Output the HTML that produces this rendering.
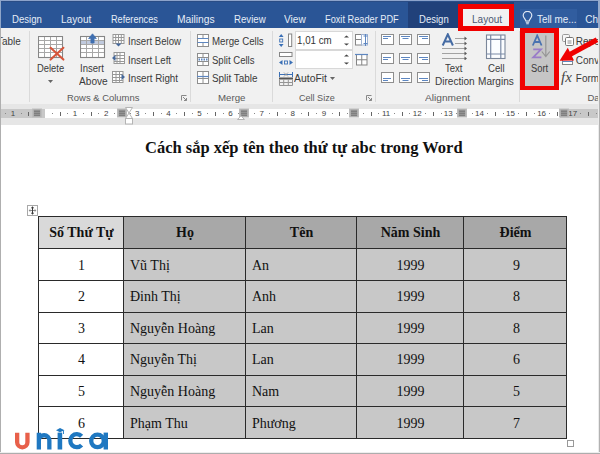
<!DOCTYPE html>
<html><head><meta charset="utf-8">
<style>
*{margin:0;padding:0;box-sizing:border-box}
html,body{width:600px;height:454px;overflow:hidden;background:#fff}
body{position:relative;font-family:"Liberation Sans",sans-serif}
.a{position:absolute;white-space:nowrap}
.sep{position:absolute;width:1px;background:#dadada;top:31px;height:71px}
.rn{position:absolute;top:108.5px;font-size:8px;line-height:10px;color:#444}
.tk{position:absolute;width:1px;height:4px;top:112px;background:#666}
.dt{position:absolute;width:1px;height:1px;top:113px;background:#888}
.cm{position:absolute;top:109px;width:9px;height:9px;background:#b5b5b5}
.tt{font-family:"Liberation Serif",serif;font-size:14px;line-height:16px;color:#111}
</style></head><body>
<!-- ===== tab bar ===== -->
<div class="a" style="left:0;top:0;width:600px;height:28px;background:#2a5596"></div>
<div class="a" style="left:408px;top:1px;width:106px;height:27px;background:#21417a"></div>
<div class="a" style="left:520px;top:9px;width:57px;height:19px;background:#315d9f"></div>
<div class="a" style="left:0;top:0;width:600px;height:1px;background:#8ca3cb"></div>
<div class="a" style="left:0;top:1px;width:600px;height:1px;background:#2a4d86"></div>
<!-- lightbulb -->
<svg class="a" style="left:522px;top:11px" width="11" height="14" viewBox="0 0 11 14"><path d="M3.8 10 C3.8 8 1.2 7 1.2 4.6 A4.3 4.3 0 0 1 9.8 4.6 C9.8 7 7.2 8 7.2 10 Z" fill="none" stroke="#dfe7f3" stroke-width="1.2"/><path d="M3.8 11.2h3.4M4.2 12.8h2.6" stroke="#dfe7f3" stroke-width="1.1"/></svg>

<!-- ===== ribbon ===== -->
<div class="a" style="left:0;top:28px;width:600px;height:76px;background:#f1f1f1"></div>
<!-- layout tab red box -->
<div class="a" style="left:458px;top:4px;width:56px;height:27px;background:#f1f1f1;border:5px solid #f00000"></div>
<div class="sep" style="left:29px"></div>
<div class="sep" style="left:190px"></div>
<div class="sep" style="left:272px"></div>
<div class="sep" style="left:375px"></div>
<div class="sep" style="left:519px"></div>

<!-- Delete icon -->
<svg class="a" style="left:38px;top:36px" width="27" height="26" viewBox="0 0 27 26">
<rect x="0.5" y="0.5" width="24" height="21" fill="#fff"/>
<path d="M0.5 4.5h24M0.5 8.5h24M0.5 12.5h24M0.5 16.5h24M6.5 0.5v21M12.5 0.5v21M18.5 0.5v21" stroke="#a8a8a8" stroke-width="1"/>
<rect x="0.5" y="0.5" width="24" height="21" fill="none" stroke="#868686" stroke-width="1.1"/>
<path d="M12.6 11.8 L25.4 23.6 M25.4 11.8 L12.6 23.6" stroke="#d6553a" stroke-width="2.1" stroke-linecap="round"/>
</svg>
<svg class="a" style="left:48px;top:80px" width="5" height="3"><path d="M0 0h5L2.5 3z" fill="#666"/></svg>

<!-- Insert Above icon -->
<svg class="a" style="left:80px;top:32px" width="26" height="27" viewBox="0 0 26 27">
<rect x="0.5" y="4.5" width="24" height="21" fill="#fff"/>
<rect x="0.5" y="8" width="24" height="4.5" fill="#c0cade"/>
<path d="M0.5 8.5h24M0.5 12.5h24M0.5 16.5h24M0.5 20.5h24M6.5 4.5v21M12.5 4.5v21M18.5 4.5v21" stroke="#a8a8a8" stroke-width="1"/>
<rect x="0.5" y="4.5" width="24" height="21" fill="none" stroke="#868686" stroke-width="1.1"/>
<path d="M12.5 1.8 L8.6 6.6 H10.9 V11 H14.1 V6.6 H16.4 Z" fill="#3f6fb0" stroke="#3f6fb0" stroke-width="0.7" stroke-linejoin="round"/>
</svg>

<!-- small insert icons -->
<svg class="a" style="left:112px;top:34px" width="13" height="13" viewBox="0 0 13 13"><rect x="1" y="0.5" width="11" height="9" fill="#fff"/><path d="M1 0.5h11M1 3.5h11M1 6.5h11M1 9.5h11M1 0v10M3.7 0v10M6.5 0v10M9.3 0v10M12 0v10" stroke="#989898" stroke-width="1"/><path d="M6.5 12.5 L3.5 9.5 H9.5 Z" fill="#44689c"/></svg>
<svg class="a" style="left:112px;top:52px" width="13" height="13" viewBox="0 0 13 13"><rect x="2" y="0.5" width="10.5" height="11" fill="#fff"/><path d="M2 0.5h10.5M2 3.5h10.5M2 6.5h10.5M2 9.5h10.5M2 11.5h10.5M2 0v12M5 0v12M8 0v12M12.5 0v12" stroke="#989898" stroke-width="1"/><path d="M0 6 L3.5 3 V9 Z" fill="#44689c"/></svg>
<svg class="a" style="left:112px;top:71px" width="13" height="13" viewBox="0 0 13 13"><rect x="0.5" y="0.5" width="10.5" height="11" fill="#fff"/><path d="M0.5 0.5h10.5M0.5 3.5h10.5M0.5 6.5h10.5M0.5 9.5h10.5M0.5 11.5h10.5M0.5 0v12M4 0v12M7.5 0v12M11 0v12" stroke="#989898" stroke-width="1"/><path d="M13 6 L9.5 3 V9 Z" fill="#44689c"/></svg>
<svg class="a" style="left:181px;top:95px" width="6" height="6"><path d="M0.5 5.5V0.5H5.5" stroke="#888" fill="none"/><path d="M2 2L5.5 5.5M3 5.5h2.5V3" stroke="#888" fill="none"/></svg>

<!-- Merge icons -->
<svg class="a" style="left:197px;top:34px" width="12" height="13" viewBox="0 0 12 13"><rect x="0.5" y="0.5" width="11" height="12" fill="#fff" stroke="#8e8e8e"/><path d="M6 0.5v4M6 8.5v4" stroke="#8e8e8e"/><path d="M0.5 4.5h11M0.5 8.5h11" stroke="#5d86c0" stroke-width="1.2"/></svg>
<svg class="a" style="left:197px;top:53px" width="12" height="13" viewBox="0 0 12 13"><rect x="0.5" y="0.5" width="11" height="12" fill="#fff" stroke="#8e8e8e"/><path d="M6 0.5v4M6 8.5v4" stroke="#8e8e8e"/><path d="M0.5 4.5h11M0.5 8.5h11" stroke="#8e8e8e" stroke-width="1"/><path d="M1.5 6.5h9" stroke="#5d86c0" stroke-width="2.2" stroke-dasharray="1.5 1"/></svg>
<svg class="a" style="left:197px;top:71px" width="12" height="13" viewBox="0 0 12 13"><rect x="0.5" y="0.5" width="11" height="12" fill="#fff" stroke="#8e8e8e"/><path d="M6 0.5v12" stroke="#8e8e8e"/><path d="M0 5.5h12" stroke="#5d86c0" stroke-width="1.2"/><path d="M0 7.5h12" stroke="#8e8e8e"/></svg>

<!-- Cell Size icons -->
<svg class="a" style="left:278px;top:33px" width="16" height="15" viewBox="0 0 16 15">
<path d="M3.2 1 L0.8 4 H5.6 Z M3.2 14 L0.8 11 H5.6 Z" fill="#3b70b6"/>
<rect x="1.7" y="6" width="3" height="3" fill="none" stroke="#3b70b6" stroke-width="0.9"/>
<rect x="10.5" y="1" width="3.2" height="12.5" fill="#fff" stroke="#858585"/>
</svg>
<div class="a" style="left:295px;top:31px;width:58px;height:19px;background:#fff;border:1px solid #d8d8d8"></div>
<svg class="a" style="left:344px;top:35px" width="5" height="11"><path d="M0 2.5L2.5 0.5L5 2.5ZM0 8.5L2.5 10.5L5 8.5Z" fill="#444"/></svg>
<svg class="a" style="left:278px;top:52px" width="16" height="14" viewBox="0 0 16 14">
<rect x="1.5" y="0.5" width="12.5" height="4" fill="#fff" stroke="#858585"/>
<path d="M1 10.5 L4.5 8 V13 Z M15 10.5 L11.5 8 V13 Z" fill="#3b70b6"/>
<rect x="6.5" y="9" width="3" height="3" fill="none" stroke="#3b70b6" stroke-width="0.9"/>
</svg>
<div class="a" style="left:295px;top:50px;width:58px;height:19px;background:#fff;border:1px solid #d8d8d8"></div>
<svg class="a" style="left:344px;top:54px" width="5" height="11"><path d="M0 2.5L2.5 0.5L5 2.5ZM0 8.5L2.5 10.5L5 8.5Z" fill="#444"/></svg>
<svg class="a" style="left:355px;top:34px" width="15" height="12" viewBox="0 0 15 12"><rect x="0.5" y="0.5" width="6" height="10.5" fill="#fff" stroke="#858585"/><path d="M0.5 5.5h6" stroke="#858585"/><rect x="6.5" y="0.5" width="6" height="10.5" fill="#fff" stroke="#9fb3d3"/><path d="M10.5 0v12M8.5 2h4M8.5 9.5h4" stroke="#5d86c0"/></svg>
<svg class="a" style="left:355px;top:53px" width="13" height="13" viewBox="0 0 13 13"><rect x="1.5" y="1.5" width="10.5" height="10.5" fill="#fff" stroke="#858585"/><path d="M6.75 1.5v10.5M1.5 6.75h10.5" stroke="#858585"/><path d="M0 1.5h13" stroke="#5d86c0" stroke-width="1.2"/></svg>
<svg class="a" style="left:279px;top:71px" width="14" height="15" viewBox="0 0 14 15">
<path d="M0.5 1v5M13.5 1v5M0.5 3.5h13" stroke="#3b70b6" stroke-width="1"/>
<path d="M5 1.5l4 4M9 1.5l-4 4" stroke="#959595" stroke-width="0.9"/>
<rect x="0" y="6.5" width="14" height="2" fill="#555"/>
<path d="M0.5 8.5v6M4.7 8.5v6M9.3 8.5v6M13.5 8.5v6M0.5 11.5h13M0.5 14.5h13" stroke="#959595"/>
</svg>
<svg class="a" style="left:330px;top:77px" width="5" height="3"><path d="M0 0h5L2.5 3z" fill="#666"/></svg>
<svg class="a" style="left:366px;top:95px" width="6" height="6"><path d="M0.5 5.5V0.5H5.5" stroke="#888" fill="none"/><path d="M2 2L5.5 5.5M3 5.5h2.5V3" stroke="#888" fill="none"/></svg>

<!-- Alignment 3x3 -->
<svg class="a" style="left:380px;top:33px" width="52" height="51" viewBox="0 0 52 51">
<g fill="#fff" stroke="#8e8e8e">
<rect x="1.5" y="1.5" width="12" height="10"/><rect x="19.5" y="1.5" width="12" height="10"/><rect x="37.5" y="1.5" width="12" height="10"/>
<rect x="1.5" y="20.5" width="12" height="10"/><rect x="19.5" y="20.5" width="12" height="10"/><rect x="37.5" y="20.5" width="12" height="10"/>
<rect x="1.5" y="39.5" width="12" height="10"/><rect x="19.5" y="39.5" width="12" height="10"/><rect x="37.5" y="39.5" width="12" height="10"/>
</g>
<g stroke="#5d86c0" stroke-width="1">
<path d="M3 3.5h8M3 5.5h5M21 3.5h9M22.5 5.5h6M39 3.5h9M42 5.5h6"/>
<path d="M3 24.5h8M3 26.5h5M21 24.5h9M22.5 26.5h6M39 24.5h9M42 26.5h6"/>
<path d="M3 45.5h8M3 47.5h5M21 45.5h9M22.5 47.5h6M39 45.5h9M42 47.5h6"/>
</g>
</svg>

<!-- Text Direction icon -->
<svg class="a" style="left:440px;top:33px" width="30" height="27" viewBox="0 0 30 27">
<path d="M2.7 12.5 L7.8 1.3 L12.9 12.5 M4.6 8.5 H11" stroke="#456ba3" stroke-width="2" fill="none" stroke-linejoin="miter"/>
<path d="M15 5.5h10M15 10.5h10M2 15.5h23M2 20.5h23M2 25.5h23" stroke="#a2a2a2" stroke-width="1.1"/>
<path d="M24.5 3.5 L27 5.5 L24.5 7.5 Z M24.5 8.5 L27 10.5 L24.5 12.5 Z M24.5 13.5 L27 15.5 L24.5 17.5 Z M24.5 18.5 L27 20.5 L24.5 22.5 Z M24.5 23.5 L27 25.5 L24.5 27.5 Z" fill="#5a5a5a"/>
</svg>

<!-- Cell Margins icon -->
<svg class="a" style="left:485px;top:34px" width="21" height="26" viewBox="0 0 21 26">
<rect x="1.5" y="1" width="18.5" height="23.5" fill="#fbfdff" stroke="#7b879a" stroke-width="1.1"/>
<path d="M5.7 1v23.5M15.8 1v23.5M1.5 5.3h18.5M1.5 20h18.5" stroke="#7b8aa6" stroke-width="1.2"/>
</svg>

<!-- Sort -->
<div class="a" style="left:520px;top:28px;width:39px;height:62px;background:#c5c5c5;border:5px solid #f00000;border-top-width:5px;border-bottom-width:4px"></div>
<svg class="a" style="left:531px;top:34px" width="22" height="25" viewBox="0 0 22 25">
<path d="M1.8 11.5 L6.2 1.5 L10.6 11.5 M3.4 8 H9" stroke="#4a72b0" stroke-width="1.8" fill="none"/>
<path d="M2.2 15.3 H10 L2.2 23.3 H10.4" stroke="#9a7cc8" stroke-width="1.8" fill="none"/>
<path d="M14.8 1.5 V22 M10.8 17.5 L14.8 22.5 L18.8 17.5" stroke="#959595" stroke-width="1.2" fill="none"/>
</svg>

<!-- Data group icons -->
<svg class="a" style="left:562px;top:34px" width="12" height="12" viewBox="0 0 12 12"><rect x="0.5" y="0.5" width="7" height="7" rx="1.2" fill="#f6f6f6" stroke="#9a9a9a"/><rect x="3.5" y="3.5" width="8" height="8" rx="1.2" fill="#fff" stroke="#777"/><path d="M5.5 7h4M5.5 9h4" stroke="#8a8a8a"/></svg>
<svg class="a" style="left:562px;top:53px" width="13" height="12" viewBox="0 0 13 12"><rect x="0.5" y="5.5" width="10" height="6" fill="#fff" stroke="#858585"/><path d="M0.5 8.5h10" stroke="#5d86c0"/></svg>
<span class="a" style="left:561px;top:70px;font-family:'Liberation Serif',serif;font-style:italic;font-size:15px;line-height:15px;color:#444">fx</span>



<!-- ===== ruler ===== -->
<div class="a" style="left:0;top:104px;width:600px;height:21px;background:#e6e6e6"></div>
<div class="a" style="left:0;top:109px;width:45px;height:9px;background:#c8c8c8"></div>
<div class="a" style="left:45px;top:109px;width:515px;height:9px;background:#fff"></div>
<div class="a" style="left:560px;top:109px;width:40px;height:9px;background:#c8c8c8"></div>
<div class="dt" style="left:5px"></div>
<span class="rn" style="left:-7.1px;width:40px;text-align:center">1</span>
<div class="dt" style="left:21px"></div>
<div class="tk" style="left:28px"></div>
<div class="dt" style="left:36px"></div>
<div class="dt" style="left:52px"></div>
<div class="tk" style="left:60px"></div>
<div class="dt" style="left:67px"></div>
<span class="rn" style="left:55.1px;width:40px;text-align:center">1</span>
<div class="dt" style="left:83px"></div>
<div class="tk" style="left:91px"></div>
<div class="dt" style="left:98px"></div>
<span class="rn" style="left:86.2px;width:40px;text-align:center">2</span>
<div class="dt" style="left:114px"></div>
<div class="tk" style="left:122px"></div>
<div class="dt" style="left:130px"></div>
<span class="rn" style="left:117.3px;width:40px;text-align:center">3</span>
<div class="dt" style="left:145px"></div>
<div class="tk" style="left:153px"></div>
<div class="dt" style="left:161px"></div>
<span class="rn" style="left:148.4px;width:40px;text-align:center">4</span>
<div class="dt" style="left:176px"></div>
<div class="tk" style="left:184px"></div>
<div class="dt" style="left:192px"></div>
<span class="rn" style="left:179.5px;width:40px;text-align:center">5</span>
<div class="dt" style="left:207px"></div>
<div class="tk" style="left:215px"></div>
<div class="dt" style="left:223px"></div>
<span class="rn" style="left:210.6px;width:40px;text-align:center">6</span>
<div class="dt" style="left:238px"></div>
<div class="tk" style="left:246px"></div>
<div class="dt" style="left:254px"></div>
<span class="rn" style="left:241.7px;width:40px;text-align:center">7</span>
<div class="dt" style="left:269px"></div>
<div class="tk" style="left:277px"></div>
<div class="dt" style="left:285px"></div>
<span class="rn" style="left:272.8px;width:40px;text-align:center">8</span>
<div class="dt" style="left:301px"></div>
<div class="tk" style="left:308px"></div>
<div class="dt" style="left:316px"></div>
<span class="rn" style="left:303.9px;width:40px;text-align:center">9</span>
<div class="dt" style="left:332px"></div>
<div class="tk" style="left:339px"></div>
<div class="dt" style="left:347px"></div>
<div class="dt" style="left:363px"></div>
<div class="tk" style="left:371px"></div>
<div class="dt" style="left:378px"></div>
<span class="rn" style="left:366.1px;width:40px;text-align:center">11</span>
<div class="dt" style="left:394px"></div>
<div class="tk" style="left:402px"></div>
<div class="dt" style="left:409px"></div>
<span class="rn" style="left:397.2px;width:40px;text-align:center">12</span>
<div class="dt" style="left:425px"></div>
<div class="tk" style="left:433px"></div>
<div class="dt" style="left:441px"></div>
<span class="rn" style="left:428.3px;width:40px;text-align:center">13</span>
<div class="dt" style="left:456px"></div>
<div class="tk" style="left:464px"></div>
<div class="dt" style="left:472px"></div>
<span class="rn" style="left:459.4px;width:40px;text-align:center">14</span>
<div class="dt" style="left:487px"></div>
<div class="tk" style="left:495px"></div>
<div class="dt" style="left:503px"></div>
<span class="rn" style="left:490.5px;width:40px;text-align:center">15</span>
<div class="dt" style="left:518px"></div>
<div class="tk" style="left:526px"></div>
<div class="dt" style="left:534px"></div>
<span class="rn" style="left:521.6px;width:40px;text-align:center">16</span>
<div class="dt" style="left:549px"></div>
<div class="tk" style="left:557px"></div>
<div class="dt" style="left:565px"></div>
<span class="rn" style="left:552.7px;width:40px;text-align:center">17</span>
<div class="dt" style="left:580px"></div>
<div class="tk" style="left:588px"></div>
<div class="dt" style="left:596px"></div>
<svg class="a" style="left:32.0px;top:108px" width="10" height="10" viewBox="0 0 10 10"><rect x="0" y="0.5" width="10" height="9" fill="#bdbdbd"/><rect x="1.5" y="1.5" width="7" height="7" fill="#a5a5a5"/><path d="M3 2v6M5 2v6M7 2v6M2 3.5h6M2 5.5h6M2 7.5h6" stroke="#7a7a7a" stroke-width="0.8"/></svg>
<svg class="a" style="left:116.7px;top:108px" width="10" height="10" viewBox="0 0 10 10"><rect x="0" y="0.5" width="10" height="9" fill="#bdbdbd"/><rect x="1.5" y="1.5" width="7" height="7" fill="#a5a5a5"/><path d="M3 2v6M5 2v6M7 2v6M2 3.5h6M2 5.5h6M2 7.5h6" stroke="#7a7a7a" stroke-width="0.8"/></svg>
<svg class="a" style="left:239.0px;top:108px" width="10" height="10" viewBox="0 0 10 10"><rect x="0" y="0.5" width="10" height="9" fill="#bdbdbd"/><rect x="1.5" y="1.5" width="7" height="7" fill="#a5a5a5"/><path d="M3 2v6M5 2v6M7 2v6M2 3.5h6M2 5.5h6M2 7.5h6" stroke="#7a7a7a" stroke-width="0.8"/></svg>
<svg class="a" style="left:349.0px;top:108px" width="10" height="10" viewBox="0 0 10 10"><rect x="0" y="0.5" width="10" height="9" fill="#bdbdbd"/><rect x="1.5" y="1.5" width="7" height="7" fill="#a5a5a5"/><path d="M3 2v6M5 2v6M7 2v6M2 3.5h6M2 5.5h6M2 7.5h6" stroke="#7a7a7a" stroke-width="0.8"/></svg>
<svg class="a" style="left:457.0px;top:108px" width="10" height="10" viewBox="0 0 10 10"><rect x="0" y="0.5" width="10" height="9" fill="#bdbdbd"/><rect x="1.5" y="1.5" width="7" height="7" fill="#a5a5a5"/><path d="M3 2v6M5 2v6M7 2v6M2 3.5h6M2 5.5h6M2 7.5h6" stroke="#7a7a7a" stroke-width="0.8"/></svg>
<svg class="a" style="left:559.0px;top:108px" width="10" height="10" viewBox="0 0 10 10"><rect x="0" y="0.5" width="10" height="9" fill="#bdbdbd"/><rect x="1.5" y="1.5" width="7" height="7" fill="#a5a5a5"/><path d="M3 2v6M5 2v6M7 2v6M2 3.5h6M2 5.5h6M2 7.5h6" stroke="#7a7a7a" stroke-width="0.8"/></svg>
<svg class="a" style="left:125px;top:107px" width="8" height="18" viewBox="0 0 8 18"><path d="M0.5 0.5H7.5L4 6 L7.5 11.5H0.5L4 6Z" fill="#fff" stroke="#b4b4b4"/><rect x="0.5" y="11.5" width="7" height="5.5" fill="#fff" stroke="#b4b4b4"/></svg>
<svg class="a" style="left:237px;top:115px" width="8" height="5" viewBox="0 0 8 5"><path d="M0.5 4.5L4 0.8L7.5 4.5Z" fill="#fff" stroke="#b4b4b4"/></svg>

<!-- ===== document ===== -->
<div class="a" style="left:0;top:125px;width:600px;height:329px;background:#fff"></div>


<div class="a" style="left:145px;top:138px;font-family:'Liberation Serif',serif;font-weight:bold;font-size:16.5px;line-height:20px;color:#111">Cách sắp xếp tên theo thứ tự abc trong Word</div>

<!-- table move handle -->
<div class="a" style="left:27px;top:205px;width:11px;height:11px;border:1px solid #a8a8a8;background:#fff"></div>
<svg class="a" style="left:28px;top:206px" width="9" height="9" viewBox="0 0 9 9"><path d="M1.5 4.5h6" stroke="#8a8a8a" stroke-width="1"/><path d="M0.6 4.5L2.3 3V6ZM8.4 4.5L6.7 3V6Z" fill="#8a8a8a"/><path d="M4.5 1.5v6" stroke="#3a3a3a" stroke-width="1"/><path d="M4.5 0.3L2.8 2.3H6.2ZM4.5 8.7L2.8 6.7H6.2Z" fill="#3a3a3a"/></svg>

<div class="a" style="left:38px;top:216px;width:85px;height:32px;background:#d9d9d9"></div>
<div class="a" style="left:123px;top:216px;width:122px;height:32px;background:#a8a8a8"></div>
<div class="a" style="left:245px;top:216px;width:111px;height:32px;background:#a8a8a8"></div>
<div class="a" style="left:356px;top:216px;width:107px;height:32px;background:#a8a8a8"></div>
<div class="a" style="left:463px;top:216px;width:103px;height:32px;background:#a8a8a8"></div>
<div class="a" style="left:38px;top:248px;width:85px;height:32px;background:#ffffff"></div>
<div class="a" style="left:123px;top:248px;width:122px;height:32px;background:#c8c8c8"></div>
<div class="a" style="left:245px;top:248px;width:111px;height:32px;background:#c8c8c8"></div>
<div class="a" style="left:356px;top:248px;width:107px;height:32px;background:#c8c8c8"></div>
<div class="a" style="left:463px;top:248px;width:103px;height:32px;background:#c8c8c8"></div>
<div class="a" style="left:38px;top:280px;width:85px;height:32px;background:#ffffff"></div>
<div class="a" style="left:123px;top:280px;width:122px;height:32px;background:#c8c8c8"></div>
<div class="a" style="left:245px;top:280px;width:111px;height:32px;background:#c8c8c8"></div>
<div class="a" style="left:356px;top:280px;width:107px;height:32px;background:#c8c8c8"></div>
<div class="a" style="left:463px;top:280px;width:103px;height:32px;background:#c8c8c8"></div>
<div class="a" style="left:38px;top:312px;width:85px;height:31px;background:#ffffff"></div>
<div class="a" style="left:123px;top:312px;width:122px;height:31px;background:#c8c8c8"></div>
<div class="a" style="left:245px;top:312px;width:111px;height:31px;background:#c8c8c8"></div>
<div class="a" style="left:356px;top:312px;width:107px;height:31px;background:#c8c8c8"></div>
<div class="a" style="left:463px;top:312px;width:103px;height:31px;background:#c8c8c8"></div>
<div class="a" style="left:38px;top:343px;width:85px;height:32px;background:#ffffff"></div>
<div class="a" style="left:123px;top:343px;width:122px;height:32px;background:#c8c8c8"></div>
<div class="a" style="left:245px;top:343px;width:111px;height:32px;background:#c8c8c8"></div>
<div class="a" style="left:356px;top:343px;width:107px;height:32px;background:#c8c8c8"></div>
<div class="a" style="left:463px;top:343px;width:103px;height:32px;background:#c8c8c8"></div>
<div class="a" style="left:38px;top:375px;width:85px;height:31px;background:#ffffff"></div>
<div class="a" style="left:123px;top:375px;width:122px;height:31px;background:#c8c8c8"></div>
<div class="a" style="left:245px;top:375px;width:111px;height:31px;background:#c8c8c8"></div>
<div class="a" style="left:356px;top:375px;width:107px;height:31px;background:#c8c8c8"></div>
<div class="a" style="left:463px;top:375px;width:103px;height:31px;background:#c8c8c8"></div>
<div class="a" style="left:38px;top:406px;width:85px;height:32px;background:#ffffff"></div>
<div class="a" style="left:123px;top:406px;width:122px;height:32px;background:#c8c8c8"></div>
<div class="a" style="left:245px;top:406px;width:111px;height:32px;background:#c8c8c8"></div>
<div class="a" style="left:356px;top:406px;width:107px;height:32px;background:#c8c8c8"></div>
<div class="a" style="left:463px;top:406px;width:103px;height:32px;background:#c8c8c8"></div>
<div class="a" style="left:38px;top:216px;width:529px;height:1px;background:#2a2a2a"></div>
<div class="a" style="left:38px;top:248px;width:529px;height:1px;background:#2a2a2a"></div>
<div class="a" style="left:38px;top:280px;width:529px;height:1px;background:#2a2a2a"></div>
<div class="a" style="left:38px;top:312px;width:529px;height:1px;background:#2a2a2a"></div>
<div class="a" style="left:38px;top:343px;width:529px;height:1px;background:#2a2a2a"></div>
<div class="a" style="left:38px;top:375px;width:529px;height:1px;background:#2a2a2a"></div>
<div class="a" style="left:38px;top:406px;width:529px;height:1px;background:#2a2a2a"></div>
<div class="a" style="left:38px;top:438px;width:529px;height:1px;background:#2a2a2a"></div>
<div class="a" style="left:38px;top:216px;width:1px;height:223px;background:#2a2a2a"></div>
<div class="a" style="left:123px;top:216px;width:1px;height:223px;background:#2a2a2a"></div>
<div class="a" style="left:245px;top:216px;width:1px;height:223px;background:#2a2a2a"></div>
<div class="a" style="left:356px;top:216px;width:1px;height:223px;background:#2a2a2a"></div>
<div class="a" style="left:463px;top:216px;width:1px;height:223px;background:#2a2a2a"></div>
<div class="a" style="left:566px;top:216px;width:1px;height:223px;background:#2a2a2a"></div>
<span class="a tt" style="left:39px;width:85px;text-align:center;top:225px;font-weight:bold;">Số Thứ Tự</span>
<span class="a tt" style="left:124px;width:122px;text-align:center;top:225px;font-weight:bold;">Họ</span>
<span class="a tt" style="left:246px;width:111px;text-align:center;top:225px;font-weight:bold;">Tên</span>
<span class="a tt" style="left:357px;width:107px;text-align:center;top:225px;font-weight:bold;">Năm Sinh</span>
<span class="a tt" style="left:464px;width:103px;text-align:center;top:225px;font-weight:bold;">Điểm</span>
<span class="a tt" style="left:39px;width:85px;text-align:center;top:258px;">1</span>
<span class="a tt" style="left:130px;top:258px;">Vũ Thị</span>
<span class="a tt" style="left:252px;top:258px;">An</span>
<span class="a tt" style="left:357px;width:107px;text-align:center;top:258px;">1999</span>
<span class="a tt" style="left:465px;width:103px;text-align:center;top:258px;">9</span>
<span class="a tt" style="left:39px;width:85px;text-align:center;top:289px;">2</span>
<span class="a tt" style="left:130px;top:289px;">Đinh Thị</span>
<span class="a tt" style="left:252px;top:289px;">Anh</span>
<span class="a tt" style="left:357px;width:107px;text-align:center;top:289px;">1999</span>
<span class="a tt" style="left:465px;width:103px;text-align:center;top:289px;">8</span>
<span class="a tt" style="left:39px;width:85px;text-align:center;top:321px;">3</span>
<span class="a tt" style="left:130px;top:321px;">Nguyễn Hoàng</span>
<span class="a tt" style="left:252px;top:321px;">Lan</span>
<span class="a tt" style="left:357px;width:107px;text-align:center;top:321px;">1999</span>
<span class="a tt" style="left:465px;width:103px;text-align:center;top:321px;">8</span>
<span class="a tt" style="left:39px;width:85px;text-align:center;top:352px;">4</span>
<span class="a tt" style="left:130px;top:352px;">Nguyễn Thị</span>
<span class="a tt" style="left:252px;top:352px;">Lan</span>
<span class="a tt" style="left:357px;width:107px;text-align:center;top:352px;">1999</span>
<span class="a tt" style="left:465px;width:103px;text-align:center;top:352px;">6</span>
<span class="a tt" style="left:39px;width:85px;text-align:center;top:384px;">5</span>
<span class="a tt" style="left:130px;top:384px;">Nguyễn Hoàng</span>
<span class="a tt" style="left:252px;top:384px;">Nam</span>
<span class="a tt" style="left:357px;width:107px;text-align:center;top:384px;">1999</span>
<span class="a tt" style="left:465px;width:103px;text-align:center;top:384px;">5</span>
<span class="a tt" style="left:39px;width:85px;text-align:center;top:416px;">6</span>
<span class="a tt" style="left:130px;top:416px;">Phạm Thu</span>
<span class="a tt" style="left:252px;top:416px;">Phương</span>
<span class="a tt" style="left:357px;width:107px;text-align:center;top:416px;">1999</span>
<span class="a tt" style="left:465px;width:103px;text-align:center;top:416px;">7</span>
<!-- table resize handle -->
<div class="a" style="left:567px;top:440px;width:7px;height:7px;border:1px solid #999;background:#fff"></div>

<span class="a" style="left:12.40px;top:14px;font-family:'Liberation Sans',sans-serif;font-size:10px;line-height:12px;color:#e6edf7;transform:scaleX(0.9569);transform-origin:0 0;">Design</span>
<span class="a" style="left:61.10px;top:14px;font-family:'Liberation Sans',sans-serif;font-size:10px;line-height:12px;color:#e6edf7;transform:scaleX(1.0089);transform-origin:0 0;">Layout</span>
<span class="a" style="left:111.10px;top:14px;font-family:'Liberation Sans',sans-serif;font-size:10px;line-height:12px;color:#e6edf7;transform:scaleX(0.9151);transform-origin:0 0;">References</span>
<span class="a" style="left:177.40px;top:14px;font-family:'Liberation Sans',sans-serif;font-size:10px;line-height:12px;color:#e6edf7;transform:scaleX(1.0276);transform-origin:0 0;">Mailings</span>
<span class="a" style="left:233.90px;top:14px;font-family:'Liberation Sans',sans-serif;font-size:10px;line-height:12px;color:#e6edf7;transform:scaleX(0.9666);transform-origin:0 0;">Review</span>
<span class="a" style="left:283.90px;top:14px;font-family:'Liberation Sans',sans-serif;font-size:10px;line-height:12px;color:#e6edf7;transform:scaleX(1.0093);transform-origin:0 0;">View</span>
<span class="a" style="left:324.90px;top:14px;font-family:'Liberation Sans',sans-serif;font-size:10px;line-height:12px;color:#e6edf7;transform:scaleX(0.9209);transform-origin:0 0;">Foxit Reader PDF</span>
<span class="a" style="left:418.90px;top:14px;font-family:'Liberation Sans',sans-serif;font-size:10px;line-height:12px;color:#e6edf7;transform:scaleX(0.9537);transform-origin:0 0;">Design</span>
<span class="a" style="left:472.40px;top:14px;font-family:'Liberation Sans',sans-serif;font-size:10px;line-height:12px;color:#4b5872;transform:scaleX(1.0023);transform-origin:0 0;">Layout</span>
<span class="a" style="left:536.90px;top:14px;font-family:'Liberation Sans',sans-serif;font-size:10px;line-height:12px;color:#e6edf7;transform:scaleX(0.9871);transform-origin:0 0;">Tell me...</span>
<span class="a" style="left:585.20px;top:14px;font-family:'Liberation Sans',sans-serif;font-size:10px;line-height:12px;color:#e6edf7;">Cha</span>
<span class="a" style="left:-2.80px;top:36px;font-family:'Liberation Sans',sans-serif;font-size:10px;line-height:12px;color:#3a3a3a;transform:scaleX(0.9914);transform-origin:0 0;">Table</span>
<span class="a" style="left:37.25px;top:63px;font-family:'Liberation Sans',sans-serif;font-size:10px;line-height:12px;color:#3a3a3a;transform:scaleX(0.9375);transform-origin:0 0;">Delete</span>
<span class="a" style="left:80.30px;top:63px;font-family:'Liberation Sans',sans-serif;font-size:10px;line-height:12px;color:#3a3a3a;transform:scaleX(0.9514);transform-origin:0 0;">Insert</span>
<span class="a" style="left:78.80px;top:76px;font-family:'Liberation Sans',sans-serif;font-size:10px;line-height:12px;color:#3a3a3a;transform:scaleX(1.0120);transform-origin:0 0;">Above</span>
<span class="a" style="left:128.20px;top:36px;font-family:'Liberation Sans',sans-serif;font-size:10px;line-height:12px;color:#3a3a3a;transform:scaleX(0.9631);transform-origin:0 0;">Insert Below</span>
<span class="a" style="left:128.20px;top:55px;font-family:'Liberation Sans',sans-serif;font-size:10px;line-height:12px;color:#3a3a3a;transform:scaleX(0.9670);transform-origin:0 0;">Insert Left</span>
<span class="a" style="left:128.20px;top:73px;font-family:'Liberation Sans',sans-serif;font-size:10px;line-height:12px;color:#3a3a3a;transform:scaleX(0.9777);transform-origin:0 0;">Insert Right</span>
<span class="a" style="left:67.43px;top:92px;font-family:'Liberation Sans',sans-serif;font-size:9.5px;line-height:11px;color:#595959;transform:scaleX(0.9942);transform-origin:0 0;">Rows &amp; Columns</span>
<span class="a" style="left:211.90px;top:36px;font-family:'Liberation Sans',sans-serif;font-size:10px;line-height:12px;color:#3a3a3a;transform:scaleX(0.9689);transform-origin:0 0;">Merge Cells</span>
<span class="a" style="left:211.90px;top:55px;font-family:'Liberation Sans',sans-serif;font-size:10px;line-height:12px;color:#3a3a3a;transform:scaleX(0.9557);transform-origin:0 0;">Split Cells</span>
<span class="a" style="left:211.90px;top:73px;font-family:'Liberation Sans',sans-serif;font-size:10px;line-height:12px;color:#3a3a3a;transform:scaleX(0.9898);transform-origin:0 0;">Split Table</span>
<span class="a" style="left:218.18px;top:92px;font-family:'Liberation Sans',sans-serif;font-size:9.5px;line-height:11px;color:#595959;transform:scaleX(1.0187);transform-origin:0 0;">Merge</span>
<span class="a" style="left:296.90px;top:35px;font-family:'Liberation Sans',sans-serif;font-size:10px;line-height:12px;color:#333;transform:scaleX(0.9753);transform-origin:0 0;">1,01 cm</span>
<span class="a" style="left:294.40px;top:73px;font-family:'Liberation Sans',sans-serif;font-size:10px;line-height:12px;color:#3a3a3a;transform:scaleX(1.0414);transform-origin:0 0;">AutoFit</span>
<span class="a" style="left:299.13px;top:92px;font-family:'Liberation Sans',sans-serif;font-size:9.5px;line-height:11px;color:#595959;transform:scaleX(0.9531);transform-origin:0 0;">Cell Size</span>
<span class="a" style="left:445.40px;top:63px;font-family:'Liberation Sans',sans-serif;font-size:10px;line-height:12px;color:#3a3a3a;transform:scaleX(0.9513);transform-origin:0 0;">Text</span>
<span class="a" style="left:434.60px;top:76px;font-family:'Liberation Sans',sans-serif;font-size:10px;line-height:12px;color:#3a3a3a;transform:scaleX(1.0059);transform-origin:0 0;">Direction</span>
<span class="a" style="left:425.43px;top:92px;font-family:'Liberation Sans',sans-serif;font-size:9.5px;line-height:11px;color:#595959;transform:scaleX(1.0684);transform-origin:0 0;">Alignment</span>
<span class="a" style="left:487.90px;top:63px;font-family:'Liberation Sans',sans-serif;font-size:10px;line-height:12px;color:#3a3a3a;transform:scaleX(0.9632);transform-origin:0 0;">Cell</span>
<span class="a" style="left:478.30px;top:76px;font-family:'Liberation Sans',sans-serif;font-size:10px;line-height:12px;color:#3a3a3a;transform:scaleX(1.0062);transform-origin:0 0;">Margins</span>
<span class="a" style="left:531.40px;top:63px;font-family:'Liberation Sans',sans-serif;font-size:10px;line-height:12px;color:#3a3a3a;transform:scaleX(0.9376);transform-origin:0 0;">Sort</span>
<span class="a" style="left:575.80px;top:36px;font-family:'Liberation Sans',sans-serif;font-size:10px;line-height:12px;color:#3a3a3a;">Repeat</span>
<span class="a" style="left:575.80px;top:55px;font-family:'Liberation Sans',sans-serif;font-size:10px;line-height:12px;color:#3a3a3a;">Convert</span>
<span class="a" style="left:575.80px;top:73px;font-family:'Liberation Sans',sans-serif;font-size:10px;line-height:12px;color:#3a3a3a;">Formula</span>
<span class="a" style="left:587.43px;top:92px;font-family:'Liberation Sans',sans-serif;font-size:9.5px;line-height:11px;color:#595959;">Data</span>
<!-- red arrow -->
<svg class="a" style="left:555px;top:33px" width="45" height="32" viewBox="0 0 45 32">
<path d="M42 6.8 L14 22" stroke="#f00000" stroke-width="5.2"/>
<path d="M4.6 27.8 L12.8 14.8 L19 27.6 Z" fill="#f00000"/>
</svg>

<!-- unica logo -->
<svg class="a" style="left:0;top:420px" width="120" height="34" viewBox="0 420 120 34">
<path d="M17.15 432.8 V442.2 A5.15 5.15 0 0 0 27.45 442.2 V432.8" stroke="#e8604a" stroke-width="4.3" fill="none"/>
<path d="M38.85 432.8 V449.5 M38.85 440.5 A5.25 5.25 0 0 1 49.35 440.5 V449.5" stroke="#1f78c1" stroke-width="4.3" fill="none"/>
<rect x="57.6" y="432.6" width="4.6" height="16.9" fill="#1f78c1"/>
<path d="M56 430.2 L60 428 L64.5 430.2 L60 432.2 Z" fill="#1f78c1"/>
<path d="M63.5 430.5 V434" stroke="#1f78c1" stroke-width="0.9"/>
<path d="M81.6 436.3 A6.5 6.5 0 1 0 81.6 445.1" stroke="#1f78c1" stroke-width="4.3" fill="none"/>
<circle cx="97.5" cy="440.9" r="6.3" stroke="#1f78c1" stroke-width="4.3" fill="none"/>
<rect x="103.6" y="432.6" width="4.4" height="16.9" fill="#1f78c1"/>
</svg>
<!-- edges -->
<div class="a" style="left:0;top:28px;width:1px;height:426px;background:#afafaf"></div>
<div class="a" style="left:0;top:0;width:1px;height:28px;background:#8fa6c9"></div>
<div class="a" style="left:598px;top:28px;width:1px;height:426px;background:#ececec"></div>
<div class="a" style="left:599px;top:28px;width:1px;height:426px;background:#b2b2b2"></div>
<div class="a" style="left:598px;top:0;width:2px;height:28px;background:#95aacb"></div>
<div class="a" style="left:0;top:452px;width:600px;height:1px;background:#eeeeee"></div>
<div class="a" style="left:0;top:453px;width:600px;height:1px;background:#adadad"></div>
</body></html>
